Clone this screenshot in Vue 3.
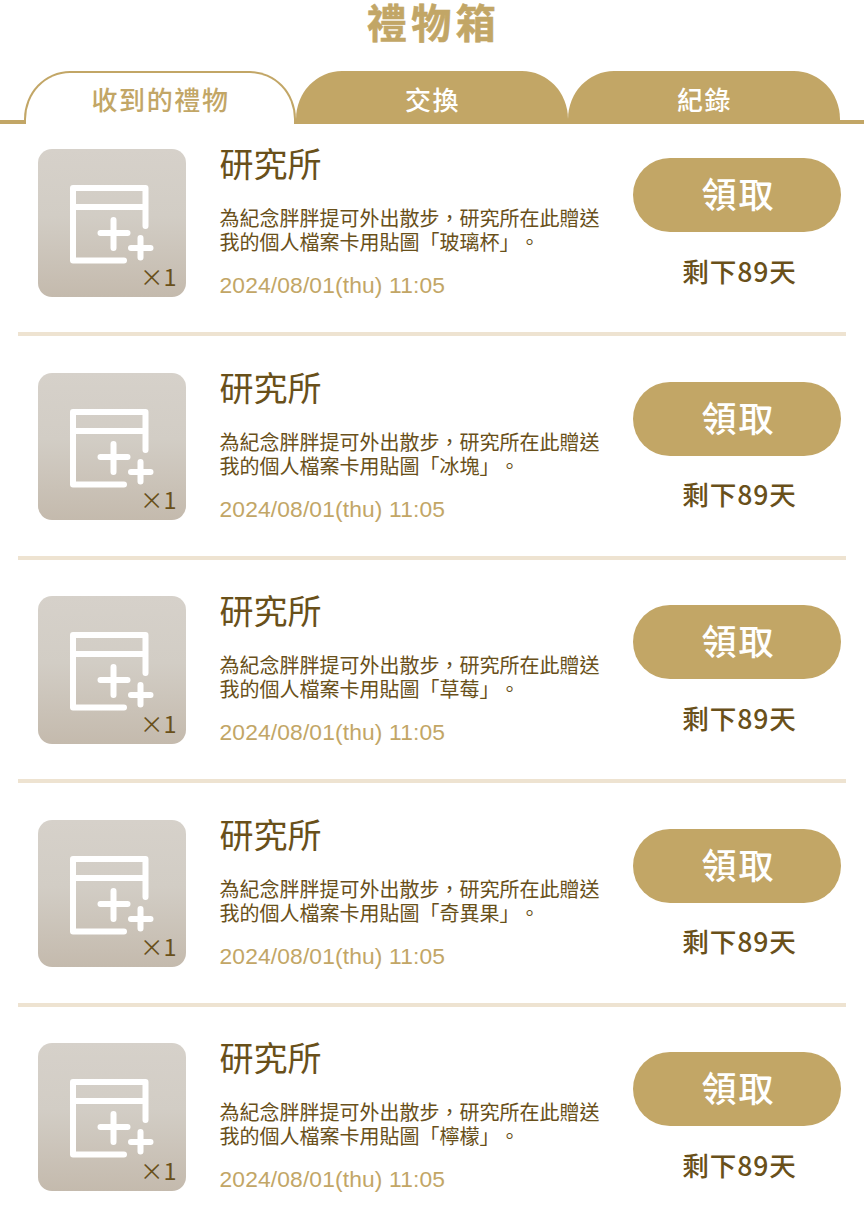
<template>
  <div class="gift-page">
    <h1 class="page-title">禮物箱</h1>

    <nav class="tabs">
      <button
        v-for="tab in tabs"
        :key="tab.id"
        class="tab"
        :class="{ 'is-active': tab.id === activeTab }"
        @click="activeTab = tab.id"
      >
        {{ tab.label }}
      </button>
    </nav>

    <ul class="gift-list">
      <li v-for="gift in gifts" :key="gift.id" class="gift-row">
        <div class="gift-thumb">
          <svg class="gift-icon" viewBox="0 0 84 80" fill="none">
            <path d="M75.5 41V3H3V75.5H54M3 22H75.5" />
            <path d="M43.5 35V63M30.5 48H57.5M70.5 53V72.5M61 63H80.5" />
          </svg>
          <span class="gift-count">×{{ gift.count }}</span>
        </div>

        <div class="gift-info">
          <h2>{{ gift.sender }}</h2>
          <p class="message">
            為紀念胖胖提可外出散步，研究所在此贈送<br />我的個人檔案卡用貼圖「{{ gift.item }}」。
          </p>
          <p class="date">{{ gift.date }}</p>
        </div>

        <div class="gift-actions">
          <button class="btn-receive">領取</button>
          <p class="remaining">剩下{{ gift.daysLeft }}天</p>
        </div>
      </li>
    </ul>
  </div>
</template>

<script setup>
import { ref } from 'vue'

const activeTab = ref('received')

const tabs = [
  { id: 'received', label: '收到的禮物' },
  { id: 'exchange', label: '交換' },
  { id: 'history', label: '紀錄' },
]

const gifts = ['玻璃杯', '冰塊', '草莓', '奇異果', '檸檬'].map((item, index) => ({
  id: index + 1,
  item,
  sender: '研究所',
  count: 1,
  date: '2024/08/01(thu) 11:05',
  daysLeft: 89,
}))
</script>

<style>
body {
  margin: 0;
  background: #fff;
}
</style>

<style scoped>
.gift-page {
  width: 864px;
  height: 1213px;
  overflow: hidden;
  font-family: 'Noto Sans CJK TC', sans-serif;
  color: #69501a;
}

h1,
h2,
p,
ul {
  margin: 0;
  padding: 0;
}

button {
  border: none;
  padding: 0;
  font-family: inherit;
  cursor: pointer;
}

.page-title {
  height: 71px;
  line-height: 42px;
  font-size: 40px;
  font-weight: 700;
  letter-spacing: 4.5px;
  text-indent: 3px;
  text-align: center;
  color: #c2a666;
  -webkit-text-stroke: 0.6px #c2a666;
}

.tabs {
  display: flex;
  height: 52.5px;
}

.tabs::before,
.tabs::after {
  content: '';
  flex: 1;
  align-self: flex-end;
  height: 3.5px;
  background: #c2a666;
}

.tab {
  box-sizing: border-box;
  width: 272px;
  border-radius: 46px 46px 0 0 / 48px 48px 0 0;
  background: #c2a666;
  color: #fff;
  font-size: 26px;
  font-weight: 500;
  line-height: 56px;
  letter-spacing: 1.6px;
  text-indent: 1px;
}

.tab.is-active {
  border: 2px solid #c2a666;
  border-bottom: none;
  background: #fff;
  color: #c2a666;
  line-height: 52px;
}

.gift-list {
  padding: 25.5px 18px 0;
  list-style: none;
}

.gift-row {
  box-sizing: border-box;
  display: flex;
  height: 187px;
  margin-bottom: 36.5px;
  padding: 0 5px 0 20px;
  border-bottom: 4px solid #eee3d1;
}

.gift-thumb {
  position: relative;
  width: 147.5px;
  height: 147.5px;
  border-radius: 14px;
  background: linear-gradient(#d6d1ca, #d2cdc5 45%, #c4baad);
}

.gift-icon {
  display: block;
  width: 84px;
  height: 80px;
  margin: 36px 0 0 32px;
  stroke: #fff;
  stroke-width: 6;
  stroke-linecap: round;
  stroke-linejoin: round;
}

.gift-count {
  position: absolute;
  right: 9px;
  bottom: 6px;
  font-size: 23.5px;
  line-height: 30px;
}

.gift-info {
  width: 400px;
  margin-left: 34px;
}

h2 {
  height: 57px;
  line-height: 28px;
  font-size: 34px;
  font-weight: 400;
}

.message {
  height: 50px;
  line-height: 24.4px;
  font-size: 20px;
  white-space: nowrap;
  text-spacing-trim: space-all;
}

.date {
  font-family: 'Liberation Sans', sans-serif;
  font-size: 22.8px;
  line-height: 58px;
  letter-spacing: 0.14px;
  color: #c2a666;
}

.gift-actions {
  width: 208px;
  margin-left: auto;
  padding-top: 9px;
  text-align: center;
}

.btn-receive {
  width: 208px;
  height: 74px;
  border-radius: 37px;
  background: #c2a666;
  color: #fff;
  font-size: 35px;
  font-weight: 500;
  line-height: 69px;
  padding-bottom: 5px;
  letter-spacing: 2px;
  text-indent: 3px;
}

.remaining {
  margin-top: 18.5px;
  line-height: 40px;
  font-size: 26.6px;
  font-weight: 500;
  letter-spacing: 0.9px;
  text-indent: 5px;
}
</style>
